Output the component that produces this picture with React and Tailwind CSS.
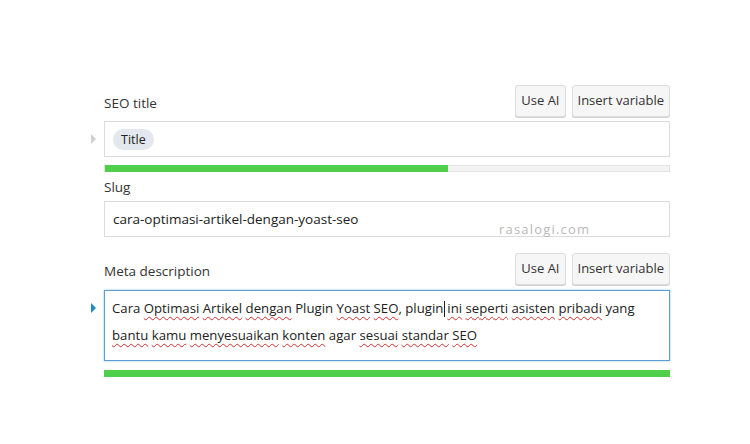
import React from "react";

const font = { fontFamily: '"Open Sans", "Noto Sans", sans-serif' };

function Btn({ children }) {
    return (
        <button className="h-[32px] px-[5px] rounded-[3px] border border-[#dcdcdc] bg-[#f6f6f6] text-[13px] text-[#333] shadow-[0_1px_0_#d0d0d0]">
            {children}
        </button>
    );
}

function Squiggle({ children }) {
    return (
        <span className="underline decoration-wavy decoration-[#d32f2f] decoration-1 underline-offset-[3px]">
            {children}
        </span>
    );
}

export default function App() {
    return (
        <div className="w-[750px] h-[444px] bg-white text-[#333]" style={font}>
            <div className="ml-[104px] w-[566px] pt-[85px]">
                {/* SEO title */}
                <div className="flex items-center justify-between h-[32px]">
                    <span className="text-[13.5px] mt-[5px]">SEO title</span>
                    <div className="flex gap-[6px]">
                        <Btn>Use AI</Btn>
                        <Btn>Insert variable</Btn>
                    </div>
                </div>
                <div className="relative mt-[4px]">
                    <span className="absolute left-[-13px] top-[13px] w-0 h-0 border-y-[5px] border-y-transparent border-l-[5px] border-l-[#d0d0d0]" />
                    <div className="h-[36px] border border-[#dcdcdc] flex items-center px-[8px]">
                        <span className="px-[8px] h-[21px] leading-[21px] rounded-full bg-[#e3e8ef] text-[12.5px] text-[#222]">Title</span>
                    </div>
                </div>
                <div className="mt-[8px] h-[7px] bg-[#f3f3f3] border border-[#e2e2e2] flex">
                    <div className="w-[343px] bg-[#4fcf4a] -my-px h-[7px]" />
                </div>

                {/* Slug */}
                <div className="mt-[5px] text-[13.5px] h-[20px] leading-[20px]">Slug</div>
                <div className="relative mt-[4px] h-[36px] border border-[#dcdcdc] flex items-center px-[8px] text-[13.5px] text-[#222]">
                    cara-optimasi-artikel-dengan-yoast-seo
                    <span className="absolute left-[394px] top-[18px] text-[13px] text-[#b8b8b8] tracking-[1.2px]">rasalogi.com</span>
                </div>

                {/* Meta description */}
                <div className="mt-[16px] flex items-center justify-between h-[32px]">
                    <span className="text-[13.5px] mt-[5px]">Meta description</span>
                    <div className="flex gap-[6px]">
                        <Btn>Use AI</Btn>
                        <Btn>Insert variable</Btn>
                    </div>
                </div>
                <div className="relative mt-[5px]">
                    <span className="absolute left-[-13px] top-[13px] w-0 h-0 border-y-[5px] border-y-transparent border-l-[5px] border-l-[#1e8cbe]" />
                    <div className="h-[71px] border border-[#5b9dd9] shadow-[0_0_2px_rgba(30,140,190,0.5)] px-[7px] pt-[4px] text-[13.2px] leading-[27px] text-[#222]">
                        Cara <Squiggle>Optimasi</Squiggle> <Squiggle>Artikel</Squiggle> <Squiggle>dengan</Squiggle> Plugin <Squiggle>Yoast</Squiggle> <Squiggle>SEO</Squiggle>, plugin<span className="inline-block w-px h-[16px] bg-[#222] align-middle ml-[1px] mr-[2px]" /><Squiggle>ini</Squiggle> <Squiggle>seperti</Squiggle> <Squiggle>asisten</Squiggle> <Squiggle>pribadi</Squiggle> yang <Squiggle>bantu</Squiggle> <Squiggle>kamu</Squiggle> <Squiggle>menyesuaikan</Squiggle> <Squiggle>konten</Squiggle> agar <Squiggle>sesuai</Squiggle> <Squiggle>standar</Squiggle> <Squiggle>SEO</Squiggle>
                    </div>
                </div>
                <div className="mt-[9px] h-[7px] bg-[#4fcf4a]" />
            </div>
        </div>
    );
}
